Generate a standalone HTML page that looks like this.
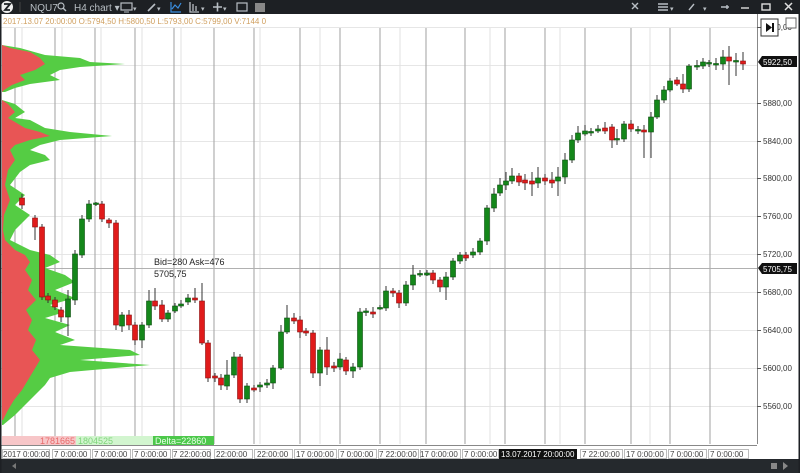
<!DOCTYPE html>
<html><head><meta charset="utf-8"><style>
body{margin:0;width:800px;height:473px;overflow:hidden;background:#fff;font-family:"Liberation Sans",sans-serif}
svg{position:absolute;left:0;top:0}
</style></head><body>
<svg width="800" height="473" viewBox="0 0 800 473" font-family="Liberation Sans, sans-serif">
<rect width="800" height="473" fill="#fff"/>
<g stroke="#e6e6e6" stroke-width="1">
<line x1="0" x2="757" y1="27.5" y2="27.5"/><line x1="0" x2="757" y1="65.5" y2="65.5"/><line x1="0" x2="757" y1="103.5" y2="103.5"/><line x1="0" x2="757" y1="141.5" y2="141.5"/><line x1="0" x2="757" y1="178.5" y2="178.5"/><line x1="0" x2="757" y1="216.5" y2="216.5"/><line x1="0" x2="757" y1="254.5" y2="254.5"/><line x1="0" x2="757" y1="292.5" y2="292.5"/><line x1="0" x2="757" y1="330.5" y2="330.5"/><line x1="0" x2="757" y1="368.5" y2="368.5"/><line x1="0" x2="757" y1="406.5" y2="406.5"/>
</g>
<g stroke="#e2e2e2"><line x1="22" x2="22" y1="28" y2="444"/><line x1="62" x2="62" y1="28" y2="444"/><line x1="101" x2="101" y1="28" y2="444"/><line x1="142" x2="142" y1="28" y2="444"/><line x1="181" x2="181" y1="28" y2="444"/><line x1="260" x2="260" y1="28" y2="444"/><line x1="320" x2="320" y1="28" y2="444"/><line x1="400" x2="400" y1="28" y2="444"/><line x1="490" x2="490" y1="28" y2="444"/><line x1="560" x2="560" y1="28" y2="444"/><line x1="650" x2="650" y1="28" y2="444"/></g>
<g stroke="#a8a8a8" stroke-width="1.1">
<line x1="15" x2="15" y1="28" y2="444"/><line x1="55" x2="55" y1="28" y2="444"/><line x1="95" x2="95" y1="28" y2="444"/><line x1="135" x2="135" y1="28" y2="444"/><line x1="174" x2="174" y1="28" y2="444"/><line x1="214" x2="214" y1="28" y2="444"/><line x1="254" x2="254" y1="28" y2="444"/><line x1="300" x2="300" y1="28" y2="444"/><line x1="340" x2="340" y1="28" y2="444"/><line x1="380" x2="380" y1="28" y2="444"/><line x1="426" x2="426" y1="28" y2="444"/><line x1="465" x2="465" y1="28" y2="444"/><line x1="505" x2="505" y1="28" y2="444"/><line x1="545" x2="545" y1="28" y2="444"/><line x1="585" x2="585" y1="28" y2="444"/><line x1="631" x2="631" y1="28" y2="444"/><line x1="670" x2="670" y1="28" y2="444"/><line x1="710" x2="710" y1="28" y2="444"/>
</g>
<line x1="757.5" x2="757.5" y1="14" y2="444" stroke="#888"/>
<line x1="0" x2="757" y1="268.5" y2="268.5" stroke="#b0b0b0"/>
<polygon fill="#55cc44" points="2,45 20,48 45,55 80,58 90,62 125,64 80,67 60,70 50,75 60,80 30,84 15,88 5,92 2,92 2,100 15,104 25,112 15,118 30,120 45,128 70,132 112,136 60,140 40,145 30,150 45,155 50,160 30,165 20,172 10,185 25,195 15,205 30,215 15,230 10,240 30,250 50,255 60,262 45,268 65,275 75,282 55,290 75,298 50,305 65,312 45,318 70,325 55,332 75,340 60,345 130,350 140,355 80,360 150,365 70,372 50,378 45,385 35,395 25,405 15,415 3,425 2,425"/>
<polygon fill="#e85555" points="2,45 10,48 30,52 40,58 45,64 35,70 20,75 25,80 12,85 4,90 2,92 2,100 8,104 15,112 8,118 15,122 25,128 40,132 50,136 30,140 15,145 10,150 15,160 8,170 5,185 10,200 4,215 3,230 5,240 15,250 25,255 30,262 25,270 32,280 28,290 36,300 26,310 32,320 28,330 36,340 32,350 40,360 34,370 28,380 22,390 14,400 8,410 3,420 2,420"/>
<g stroke="#333" stroke-width="1" fill="none">
<path d="M22 194V209M35 215V240M42 224V300M48 293V303M55 297V310M61 307V322M68 290V336M75 250V305M82 215V258M89 200V222M96 202V206M102 201V222M109 218V228M116 220V330M122 312V332M129 310V330M135 322V345M142 322V348M149 290V328M155 288V310M162 300V322M168 310V322M175 303V313M181 300V308M188 294V305M195 288V303M202 283V345M208 340V382M215 373V382M221 374V390M227 360V390M234 352V378M240 354V403M247 383V403M254 385V392M260 382V392M267 379V388M273 365V389M281 325V370M287 305V334M294 313V324M300 316V338M306 328V336M313 330V378M320 347V386M327 337V375M334 362V372M340 353V370M346 357V375M353 363V378M360 308V370M366 308V316M373 307V318M380 305V310M386 286V311M393 288V297M399 290V308M406 281V306M413 265V290M420 270V277M427 270V276M433 270V284M440 277V292M446 272V300M453 258V280M460 252V264M466 252V261M473 248V258M480 238V255M487 205V245M494 188V212M500 178V196M506 172V190M512 168V184M519 173V186M525 174V190M532 172V196M538 167V188M545 174V185M552 172V188M558 167V196M565 153V184M572 135V163M578 126V143M585 125V136M591 128V136M598 125V133M605 122V134M612 124V148M617 129V145M624 121V142M631 120V132M638 126V134M644 125V158M651 112V158M657 95V119M664 86V103M670 78V92M677 77V86M683 74V93M689 64V92M697 60V70M703 58V69M709 60V67M716 58V70M723 50V70M729 46V85M736 53V76M743 52V70"/>
</g>
<g fill="#e01b1b" stroke="#8a1010" stroke-width=".6">
<rect x="19.5" y="198" width="5" height="7"/><rect x="32.5" y="218" width="5" height="9"/><rect x="39.5" y="227" width="5" height="70"/><rect x="45.5" y="296" width="5" height="4"/><rect x="52.5" y="300" width="5" height="7"/><rect x="58.5" y="310" width="5" height="7"/><rect x="99.5" y="204" width="5" height="15"/><rect x="106.5" y="220" width="5" height="3"/><rect x="113.5" y="223" width="5" height="102"/><rect x="126.5" y="315" width="5" height="10"/><rect x="132.5" y="325" width="5" height="15"/><rect x="152.5" y="301" width="5" height="5"/><rect x="159.5" y="305" width="5" height="14"/><rect x="192.5" y="298" width="5" height="2"/><rect x="199.5" y="301" width="5" height="42"/><rect x="205.5" y="343" width="5" height="35"/><rect x="212.5" y="376" width="5" height="2"/><rect x="218.5" y="378" width="5" height="7"/><rect x="237.5" y="357" width="5" height="42"/><rect x="251.5" y="388" width="5" height="2"/><rect x="291.5" y="318" width="5" height="3"/><rect x="297.5" y="320" width="5" height="12"/><rect x="303.5" y="331" width="5" height="2"/><rect x="310.5" y="333" width="5" height="40"/><rect x="324.5" y="350" width="5" height="17"/><rect x="331.5" y="366" width="5" height="2"/><rect x="343.5" y="360" width="5" height="11"/><rect x="370.5" y="312" width="5" height="2"/><rect x="390.5" y="291" width="5" height="2"/><rect x="396.5" y="293" width="5" height="10"/><rect x="430.5" y="273" width="5" height="7"/><rect x="437.5" y="280" width="5" height="7"/><rect x="463.5" y="255" width="5" height="3"/><rect x="516.5" y="176" width="5" height="6"/><rect x="522.5" y="180" width="5" height="3"/><rect x="529.5" y="181" width="5" height="3"/><rect x="542.5" y="178" width="5" height="3"/><rect x="549.5" y="180" width="5" height="3"/><rect x="602.5" y="128" width="5" height="3"/><rect x="609.5" y="127" width="5" height="13"/><rect x="628.5" y="124" width="5" height="5"/><rect x="641.5" y="130" width="5" height="2"/><rect x="674.5" y="80" width="5" height="4"/><rect x="680.5" y="84" width="5" height="5"/><rect x="726.5" y="57" width="5" height="4"/><rect x="740.5" y="61" width="5" height="3"/>
</g>
<g fill="#14871a" stroke="#0b4d0e" stroke-width=".6">
<rect x="65.5" y="299" width="5" height="18"/><rect x="72.5" y="254" width="5" height="46"/><rect x="79.5" y="219" width="5" height="36"/><rect x="86.5" y="204" width="5" height="15"/><rect x="93.5" y="203" width="5" height="1.5"/><rect x="119.5" y="315" width="5" height="11"/><rect x="139.5" y="325" width="5" height="15"/><rect x="146.5" y="301" width="5" height="24"/><rect x="165.5" y="313" width="5" height="6"/><rect x="172.5" y="306" width="5" height="5"/><rect x="178.5" y="304" width="5" height="2"/><rect x="185.5" y="298" width="5" height="4"/><rect x="224.5" y="375" width="5" height="11"/><rect x="231.5" y="357" width="5" height="18"/><rect x="244.5" y="386" width="5" height="13"/><rect x="257.5" y="385" width="5" height="2"/><rect x="264.5" y="383" width="5" height="2"/><rect x="270.5" y="368" width="5" height="15"/><rect x="278.5" y="332" width="5" height="36"/><rect x="284.5" y="318" width="5" height="14"/><rect x="317.5" y="350" width="5" height="23"/><rect x="337.5" y="359" width="5" height="8"/><rect x="350.5" y="367" width="5" height="4"/><rect x="357.5" y="312" width="5" height="55"/><rect x="363.5" y="311" width="5" height="1.5"/><rect x="377.5" y="307.5" width="5" height="1.5"/><rect x="383.5" y="291" width="5" height="17"/><rect x="403.5" y="285" width="5" height="18"/><rect x="410.5" y="275" width="5" height="10"/><rect x="417.5" y="273.5" width="5" height="1.5"/><rect x="424.5" y="273" width="5" height="2"/><rect x="443.5" y="277" width="5" height="10"/><rect x="450.5" y="261" width="5" height="16"/><rect x="457.5" y="255" width="5" height="6"/><rect x="470.5" y="252" width="5" height="3"/><rect x="477.5" y="241" width="5" height="11"/><rect x="484.5" y="208" width="5" height="33"/><rect x="491.5" y="194" width="5" height="14"/><rect x="497.5" y="185" width="5" height="8"/><rect x="503.5" y="181" width="5" height="4"/><rect x="509.5" y="176" width="5" height="5"/><rect x="535.5" y="178" width="5" height="5"/><rect x="555.5" y="177" width="5" height="4"/><rect x="562.5" y="160" width="5" height="17"/><rect x="569.5" y="140" width="5" height="20"/><rect x="575.5" y="133" width="5" height="7"/><rect x="582.5" y="131" width="5" height="3"/><rect x="588.5" y="131.5" width="5" height="1.5"/><rect x="595.5" y="129" width="5" height="2"/><rect x="614.5" y="138.5" width="5" height="1.5"/><rect x="621.5" y="124" width="5" height="15"/><rect x="635.5" y="129.5" width="5" height="1.5"/><rect x="648.5" y="117" width="5" height="15"/><rect x="654.5" y="100" width="5" height="17"/><rect x="661.5" y="90" width="5" height="10"/><rect x="667.5" y="81" width="5" height="9"/><rect x="686.5" y="66" width="5" height="23"/><rect x="694.5" y="65.5" width="5" height="1.5"/><rect x="700.5" y="62" width="5" height="4"/><rect x="706.5" y="62.5" width="5" height="1.5"/><rect x="713.5" y="63.5" width="5" height="1.5"/><rect x="720.5" y="57" width="5" height="7"/><rect x="733.5" y="60.5" width="5" height="1.5"/>
</g>
<text x="154" y="265" font-size="9" fill="#222">Bid=280 Ask=476</text>
<text x="154" y="277" font-size="9" fill="#222">5705,75</text>
<g font-size="8" fill="#333">
<text x="763" y="30">5960,00</text><text x="763" y="106">5880,00</text><text x="763" y="144">5840,00</text><text x="763" y="181">5800,00</text><text x="763" y="219">5760,00</text><text x="763" y="257">5720,00</text><text x="763" y="295">5680,00</text><text x="763" y="333">5640,00</text><text x="763" y="371">5600,00</text><text x="763" y="409">5560,00</text>
</g>
<g stroke="#555"><line x1="757" x2="761" y1="27.5" y2="27.5"/><line x1="757" x2="761" y1="103.5" y2="103.5"/><line x1="757" x2="761" y1="141.5" y2="141.5"/><line x1="757" x2="761" y1="178.5" y2="178.5"/><line x1="757" x2="761" y1="216.5" y2="216.5"/><line x1="757" x2="761" y1="254.5" y2="254.5"/><line x1="757" x2="761" y1="292.5" y2="292.5"/><line x1="757" x2="761" y1="330.5" y2="330.5"/><line x1="757" x2="761" y1="368.5" y2="368.5"/><line x1="757" x2="761" y1="406.5" y2="406.5"/></g>
<polygon points="758,62 762,56 797,56 797,67 762,67" fill="#111"/><text x="763" y="65" font-size="8" fill="#fff">5922,50</text>
<polygon points="758,268 762,263 797,263 797,274 762,274" fill="#111"/><text x="763" y="272" font-size="8" fill="#fff">5705,75</text>
<rect x="761" y="19" width="17" height="17" fill="#fff" stroke="#333"/><path d="M766 23v9l6-4.5z" fill="#111"/><rect x="772" y="23" width="2" height="9" fill="#111"/>
<rect x="786" y="18" width="10" height="10" fill="#fff" stroke="#666"/>
<rect x="2" y="436" width="74" height="9" fill="#f7c6c8"/><rect x="76" y="436" width="77" height="9" fill="#d2f5cf"/><rect x="153" y="436" width="61" height="9" fill="#4cc84a"/>
<text x="75" y="444" font-size="9" fill="#e86a6a" text-anchor="end">1781665</text><text x="78" y="444" font-size="9" fill="#7ed47a">1804525</text><text x="155" y="444" font-size="9" fill="#e8ffe8">Delta=22860</text>
<rect x="0" y="445" width="800" height="14" fill="#fff"/>
<line x1="0" x2="757" y1="445.5" y2="445.5" stroke="#888"/>
<g fill="none" stroke="#bbb"><rect x="2.5" y="449.5" width="47" height="9"/><rect x="52.5" y="449.5" width="38" height="9"/><rect x="92.5" y="449.5" width="38" height="9"/><rect x="132.5" y="449.5" width="38" height="9"/><rect x="172.5" y="449.5" width="38" height="9"/><rect x="214.5" y="449.5" width="38" height="9"/><rect x="254.5" y="449.5" width="38" height="9"/><rect x="294.5" y="449.5" width="42" height="9"/><rect x="338.5" y="449.5" width="38" height="9"/><rect x="378.5" y="449.5" width="40" height="9"/><rect x="420.5" y="449.5" width="40" height="9"/><rect x="462.5" y="449.5" width="36" height="9"/><rect x="580.5" y="449.5" width="42" height="9"/><rect x="624.5" y="449.5" width="42" height="9"/><rect x="668.5" y="449.5" width="38" height="9"/><rect x="708.5" y="449.5" width="40" height="9"/></g>
<g font-size="8" fill="#444"><text x="3" y="457">2017 0:00:00</text><text x="54" y="457">7 0:00:00</text><text x="94" y="457">7 0:00:00</text><text x="134" y="457">7 0:00:00</text><text x="173" y="457">7 22:00:00</text><text x="216" y="457">22:00:00</text><text x="257" y="457">22:00:00</text><text x="296" y="457">17 0:00:00</text><text x="340" y="457">7 0:00:00</text><text x="379" y="457">7 22:00:00</text><text x="420" y="457">17 0:00:00</text><text x="464" y="457">7 0:00:00</text><text x="582" y="457">7 22:00:00</text><text x="626" y="457">17 0:00:00</text><text x="670" y="457">7 0:00:00</text><text x="710" y="457">7 0:00:00</text></g>
<rect x="499" y="449" width="78" height="10" fill="#111"/><text x="501" y="457" font-size="8" fill="#fff">13.07.2017 20:00:00</text>
<rect x="0" y="459" width="800" height="14" fill="#25292d"/>
<path d="M16 463v6l-4-3z" fill="#777"/><rect x="771" y="463" width="6" height="6" fill="#888"/><path d="M783 462v8l5-4z" fill="#888"/>
<rect x="0" y="0" width="800" height="14" fill="#1d2024"/>
<circle cx="7" cy="7" r="6" fill="#eee"/><path d="M4 4h6l-5 6h5" stroke="#1d2024" stroke-width="1.8" fill="none"/>
<line x1="20" x2="20" y1="2" y2="12" stroke="#444"/>
<g font-size="10" fill="#b8bec4"><text x="30" y="11">NQU7</text><text x="74" y="11">H4 chart ▾</text></g>
<circle cx="61" cy="6" r="3" stroke="#b8bec4" fill="none" stroke-width="1.2"/><line x1="63" y1="8" x2="66" y2="11" stroke="#b8bec4" stroke-width="1.4"/>
<rect x="121" y="3" width="11" height="7" fill="none" stroke="#b8bec4" stroke-width="1.2"/><line x1="124" x2="129" y1="12" y2="12" stroke="#b8bec4"/><text x="133" y="11" font-size="7" fill="#b8bec4">▾</text>
<path d="M148 11l7-7" stroke="#b8bec4" stroke-width="1.6"/><text x="157" y="11" font-size="7" fill="#b8bec4">▾</text>
<path d="M171 2v10h10M172 9l3-4 3 3 3-5" stroke="#3a8ee0" fill="none" stroke-width="1.2"/>
<path d="M190 2v10h9M193 4v7M196 6v5" stroke="#b8bec4" fill="none" stroke-width="1.3"/><text x="201" y="11" font-size="7" fill="#b8bec4">▾</text>
<path d="M213 7h9M217.5 2.5v9" stroke="#b8bec4" stroke-width="1.6"/><text x="223" y="11" font-size="7" fill="#b8bec4">▾</text>
<rect x="237" y="3" width="10" height="8" fill="none" stroke="#b8bec4" stroke-width="1.2"/>
<rect x="255" y="3" width="10" height="9" fill="#888"/>
<path d="M632 3l6 6M638 3l-6 6" stroke="#b8bec4" stroke-width="1.4"/>
<path d="M658 4h10M658 7h10M658 10h10" stroke="#b8bec4" stroke-width="1.4"/><text x="670" y="11" font-size="7" fill="#b8bec4">▾</text>
<path d="M689 10l5-6" stroke="#b8bec4" stroke-width="1.4"/><text x="703" y="11" font-size="7" fill="#b8bec4">▾</text>
<path d="M721 7h8M727 5v4" stroke="#b8bec4" stroke-width="1.4"/>
<line x1="741" x2="749" y1="8" y2="8" stroke="#ddd" stroke-width="1.4"/>
<rect x="762" y="4" width="8" height="6" fill="none" stroke="#ddd" stroke-width="1.4"/>
<path d="M785 3l7 7M792 3l-7 7" stroke="#ddd" stroke-width="1.5"/>
<text x="3" y="24" font-size="8" fill="#d0a060">2017.13.07 20:00:00    O:5794,50    H:5800,50    L:5793,00    C:5799,00    V:7144  0</text>
<rect x="0" y="0" width="1.5" height="473" fill="#1d2024"/><rect x="798.5" y="0" width="1.5" height="473" fill="#1d2024"/>
</svg>
</body></html>
